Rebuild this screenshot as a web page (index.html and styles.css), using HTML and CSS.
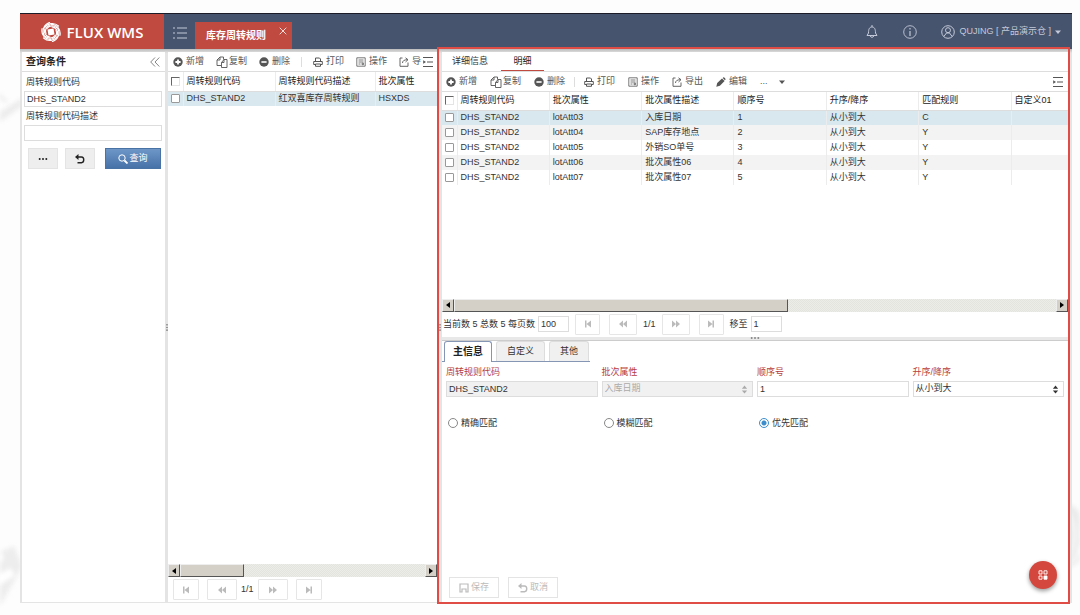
FILE: index.html
```html
<!DOCTYPE html>
<html lang="zh-CN">
<head>
<meta charset="utf-8">
<meta name="viewport" content="width=device-width, initial-scale=1">
<title>FLUX WMS</title>
<link rel="stylesheet" href="styles.css">
</head>
<body>
<svg class="sprite" aria-hidden="true">
  <symbol id="plus" viewBox="0 0 10 10"><circle cx="5" cy="5" r="4.700" fill="currentColor"/><path d="M5 2.400v5.200M2.400 5h5.200" stroke="#fff" stroke-width="1.800"/></symbol>
  <symbol id="minus" viewBox="0 0 10 10"><circle cx="5" cy="5" r="4.700" fill="currentColor"/><path d="M2.400 5h5.200" stroke="#fff" stroke-width="1.600"/></symbol>
  <symbol id="copy" viewBox="0 0 12 12" fill="none" stroke="currentColor" stroke-width=".9"><path d="M5 9.500H1V4l3-3h3.500v2.500M1 4h3V1M8 3.500h3v8H5.500V6.500l2.500-3v3H5.500"/></symbol>
  <symbol id="print" viewBox="0 0 10 10" fill="none" stroke="currentColor"><path d="M2.500 4.500V1h4l1 1v2.500M2 7.500H.7v-3h8.600v3H8M2.500 7h5v2.300h-5z"/></symbol>
  <symbol id="ops" viewBox="0 0 10 10" fill="none" stroke="currentColor" stroke-width=".8"><path d="M.8.800h8.400v8.400H.8zM2.500 3h5M2.500 5h5M2.500 7h2M6 6.200h1.500v1.500H6z"/></symbol>
  <symbol id="export" viewBox="0 0 10 10" fill="none" stroke="currentColor" stroke-width=".9"><path d="M3.500 1H1v8.300h8V5.500M3.500 6c0-2 1.500-3.300 5-3.300M6.500.8 9 2.700 6.500 5"/></symbol>
  <symbol id="edit" viewBox="0 0 10 10"><path d="M.3 9.700 1.200 6 6 1.400 8.600 4 3.900 8.700zM6.700.900 7.500.2c.5-.4 2.600 1.700 2 2.300l-.6.8z" fill="currentColor"/></symbol>
  <symbol id="indent" viewBox="0 0 12 12"><path d="M1 1.500h10M5 6h6M1 10.500h10" stroke="currentColor" stroke-width="1.100"/><path d="M1.200 4.300 4 6 1.200 7.700z" fill="currentColor"/></symbol>
  <symbol id="undo" viewBox="0 0 10 10"><path d="M2 3h4.500c3 0 3 5.700 0 5.700H2.500" fill="none" stroke="currentColor" stroke-width="1.400"/><path d="M0 3 3.500 0v6z" fill="currentColor"/></symbol>
  <symbol id="save" viewBox="0 0 10 10" fill="none" stroke="currentColor" stroke-width="1.200"><path d="M1 9V1h8v8H7V6H3v3zM3 6h4"/></symbol>
  <symbol id="first" viewBox="0 0 8 8"><path d="M1 .5h1.500v7H1zM7 .5v7L2.500 4z" fill="currentColor"/></symbol>
  <symbol id="prev" viewBox="0 0 8 8"><path d="M4 .5v7L0 4zM8 .5v7L4 4z" fill="currentColor"/></symbol>
  <symbol id="next" viewBox="0 0 8 8"><path d="M4 .5v7L8 4zM0 .5v7L4 4z" fill="currentColor"/></symbol>
  <symbol id="last" viewBox="0 0 8 8"><path d="M5.500.5H7v7H5.500zM1 .5v7L5.500 4z" fill="currentColor"/></symbol>
  <symbol id="updown" viewBox="0 0 8 10"><path d="M1 4 4 .5 7 4zM1 6l3 3.500L7 6z" fill="currentColor"/></symbol>
  <symbol id="tri" viewBox="0 0 4 6"><path d="M4 0v6L0 3z" fill="currentColor"/></symbol>
  <symbol id="down" viewBox="0 0 6 4"><path d="M0 .5h6L3 4z" fill="currentColor"/></symbol>
  <symbol id="dots" viewBox="0 0 12 4"><circle cx="2" cy="2" r="1.200" fill="currentColor"/><circle cx="6" cy="2" r="1.200" fill="currentColor"/><circle cx="10" cy="2" r="1.200" fill="currentColor"/></symbol>
</svg>
<svg class="mark mark-left-top" viewBox="0 0 30 60" aria-hidden="true"><path d="M0 42 22 28v8L0 52z" fill="#ececec"/><path d="M0 24q3 8 7 6" fill="none" stroke="#e6e6e6" stroke-width="2"/></svg>
<svg class="mark mark-left-bottom" viewBox="0 0 30 75" aria-hidden="true"><path d="M0 6 14 0l8 20-6 12L0 60z" fill="#ededed"/><path d="M0 6l4 5-4 6zM0 28l10-6 5 7L0 39z" fill="#fff"/></svg>
<svg class="mark mark-right" viewBox="0 0 12 70" aria-hidden="true"><path d="M0 2q8 2 12 10v46Q7 64 0 66z" fill="#ebebeb"/><path d="M0 10q13 22 0 46M12 44Q8 60 0 62" fill="none" stroke="#fff" stroke-width="2"/></svg>

<div class="app">
  <header class="topbar">
    <div class="brand">
      <svg viewBox="-10 -10 20 20" class="logo" aria-hidden="true"><g fill="none" stroke="#fff" stroke-width="1.200" stroke-linecap="round"><g id="arm"><path d="M-6.500-4C-3.500-9 3-10 7.500-6"/><path d="M-4-3.500C-2-6.500 2.500-7 5.500-4.500"/></g><use href="#arm" transform="rotate(60)"/><use href="#arm" transform="rotate(120)"/><use href="#arm" transform="rotate(180)"/><use href="#arm" transform="rotate(240)"/><use href="#arm" transform="rotate(300)"/></g><path d="M-3.500-2.500 2.500-3.500 3.500 2.500-2.500 3.500z" fill="#fff"/></svg>
      <span>FLUX WMS</span>
    </div>
    <button class="bare menu" aria-label="菜单"><svg viewBox="0 0 14 12"><path d="M4 1h10M4 6h10M4 11h10M0 1h2M0 6h2M0 11h2" stroke="#c3c9d8" stroke-width="1.200"/></svg></button>
    <div class="page-tab"><span>库存周转规则</span><button class="bare" aria-label="关闭"><svg viewBox="0 0 8 8"><path d="M.7.700l6.600 6.600M7.300.7.700 7.300" stroke="#fff" stroke-width=".8"/></svg></button></div>
    <div class="tools">
      <button class="bare" aria-label="通知"><svg class="i14" viewBox="0 0 14 14" fill="none" stroke="#c3c9d8"><path d="M7 0v2M2 10.500 3.500 8C3.500 4 4.500 2 7 2s3.500 2 3.500 6l1.500 2.500zM5 11q2 3 4 0"/></svg></button>
      <button class="bare" aria-label="信息"><svg class="i14" viewBox="0 0 14 14" fill="none" stroke="#c3c9d8"><circle cx="7" cy="7" r="6.300" stroke-width=".9"/><path d="M7 6v5M7 3v1.500" stroke-width="1.200"/></svg></button>
      <button class="bare user"><svg class="i14" viewBox="0 0 14 14" fill="none" stroke="#c3c9d8"><circle cx="7" cy="7" r="6.300"/><circle cx="7" cy="5.200" r="2.500"/><path d="M2.800 11.500 5.500 8h3l2.700 3.500"/></svg><span>QUJING [ 产品演示仓 ]</span><svg class="caret"><use href="#down"/></svg></button>
    </div>
  </header>

  <main class="main">
    <section class="pane">
      <div class="pane-title"><h2>查询条件</h2><button class="bare" aria-label="收起"><svg class="i10" viewBox="0 0 10 10"><path d="M5 .5.700 5 5 9.500M9.300.5 5 5l4.300 4.500" fill="none" stroke="#777" stroke-width=".9"/></svg></button></div>
      <form class="query">
        <label for="q1">周转规则代码</label>
        <input id="q1" value="DHS_STAND2">
        <label for="q2">周转规则代码描述</label>
        <input id="q2">
        <div class="query-actions">
          <button type="button" class="gray" aria-label="更多"><svg class="dots"><use href="#dots"/></svg></button>
          <button type="button" class="gray" aria-label="重置"><svg class="i10"><use href="#undo"/></svg></button>
          <button type="button" class="primary"><svg class="i10" viewBox="0 0 10 10"><circle cx="4" cy="4" r="3.200" fill="none" stroke="#fff"/><path d="M6.500 6.500 9.500 9.500" stroke="#fff" stroke-width="1.800"/></svg>查询</button>
        </div>
      </form>
    </section>
    <div class="gutter"><svg class="grip"><use href="#dots"/></svg></div>

    <section class="pane">
      <div class="toolbar">
        <button class="bare"><svg class="i10"><use href="#plus"/></svg>新增</button>
        <button class="bare"><svg class="i12"><use href="#copy"/></svg>复制</button>
        <button class="bare"><svg class="i10"><use href="#minus"/></svg>删除</button>
        <i class="sep"></i>
        <button class="bare"><svg class="i10"><use href="#print"/></svg>打印</button>
        <button class="bare"><svg class="i10"><use href="#ops"/></svg>操作</button>
        <button class="bare"><svg class="i10"><use href="#export"/></svg>导</button>
        <button class="bare columns" aria-label="列设置"><svg class="i12"><use href="#indent"/></svg></button>
      </div>
      <table class="grid tall-head">
        <colgroup><col class="c-check"><col class="c-code"><col class="c-desc"><col></colgroup>
        <thead><tr><th><input type="checkbox" class="old" aria-label="全选"></th><th>周转规则代码</th><th>周转规则代码描述</th><th>批次属性</th></tr></thead>
        <tbody><tr class="selected"><td><input type="checkbox" aria-label="选择"></td><td>DHS_STAND2</td><td>红双喜库存周转规则</td><td>HSXDS</td></tr></tbody>
      </table>
      <div class="fill"></div>
      <div class="scroll"><button aria-label="向左"><svg><use href="#tri"/></svg></button><div class="track"><div class="thumb" style="width:26%"></div></div><button class="flip" aria-label="向右"><svg><use href="#tri"/></svg></button></div>
      <div class="pager mid-pager">
        <button aria-label="首页"><svg><use href="#first"/></svg></button>
        <button aria-label="上一页"><svg><use href="#prev"/></svg></button>
        <span>1/1</span>
        <button aria-label="下一页"><svg><use href="#next"/></svg></button>
        <button aria-label="末页"><svg><use href="#last"/></svg></button>
      </div>
    </section>
    <div class="gutter"><svg class="grip"><use href="#dots"/></svg></div>

    <section class="pane detail">
      <div class="upper">
        <nav class="tabs"><button class="bare">详细信息</button><button class="bare active">明细</button></nav>
        <div class="toolbar">
          <button class="bare"><svg class="i10"><use href="#plus"/></svg>新增</button>
          <button class="bare"><svg class="i12"><use href="#copy"/></svg>复制</button>
          <button class="bare"><svg class="i10"><use href="#minus"/></svg>删除</button>
          <i class="sep"></i>
          <button class="bare"><svg class="i10"><use href="#print"/></svg>打印</button>
          <button class="bare"><svg class="i10"><use href="#ops"/></svg>操作</button>
          <button class="bare"><svg class="i10"><use href="#export"/></svg>导出</button>
          <button class="bare"><svg class="i10"><use href="#edit"/></svg>编辑</button>
          <button class="bare more">...<svg class="caret"><use href="#down"/></svg></button>
          <button class="bare columns" aria-label="列设置"><svg class="i12"><use href="#indent"/></svg></button>
        </div>
        <table class="grid">
          <colgroup><col class="c-check"><col><col><col><col><col><col><col class="c-last"></colgroup>
          <thead><tr><th><input type="checkbox" class="old" aria-label="全选"></th><th>周转规则代码</th><th>批次属性</th><th>批次属性描述</th><th>顺序号</th><th>升序/降序</th><th>匹配规则</th><th>自定义01</th></tr></thead>
          <tbody>
            <tr class="selected"><td><input type="checkbox" aria-label="选择 1"></td><td>DHS_STAND2</td><td>lotAtt03</td><td>入库日期</td><td>1</td><td>从小到大</td><td>C</td><td></td></tr>
            <tr><td><input type="checkbox" aria-label="选择 2"></td><td>DHS_STAND2</td><td>lotAtt04</td><td>SAP库存地点</td><td>2</td><td>从小到大</td><td>Y</td><td></td></tr>
            <tr><td><input type="checkbox" aria-label="选择 3"></td><td>DHS_STAND2</td><td>lotAtt05</td><td>外销SO单号</td><td>3</td><td>从小到大</td><td>Y</td><td></td></tr>
            <tr><td><input type="checkbox" aria-label="选择 4"></td><td>DHS_STAND2</td><td>lotAtt06</td><td>批次属性06</td><td>4</td><td>从小到大</td><td>Y</td><td></td></tr>
            <tr><td><input type="checkbox" aria-label="选择 5"></td><td>DHS_STAND2</td><td>lotAtt07</td><td>批次属性07</td><td>5</td><td>从小到大</td><td>Y</td><td></td></tr>
          </tbody>
        </table>
        <div class="fill"></div>
        <div class="scroll"><button aria-label="向左"><svg><use href="#tri"/></svg></button><div class="track"><div class="thumb" style="width:55.4%"></div></div><button class="flip" aria-label="向右"><svg><use href="#tri"/></svg></button></div>
        <div class="pager">
          <label for="size">当前数 5 总数 5 每页数</label><input id="size" value="100">
          <button aria-label="首页"><svg><use href="#first"/></svg></button>
          <button aria-label="上一页"><svg><use href="#prev"/></svg></button>
          <span>1/1</span>
          <button aria-label="下一页"><svg><use href="#next"/></svg></button>
          <button aria-label="末页"><svg><use href="#last"/></svg></button>
          <label for="goto">移至</label><input id="goto" value="1">
        </div>
      </div>
      <div class="splitter"><svg class="dots"><use href="#dots"/></svg></div>
      <form class="lower">
        <div class="subtabs"><button type="button" class="on">主信息</button><button type="button">自定义</button><button type="button">其他</button></div>
        <div class="fields">
          <div class="field"><label for="f1">周转规则代码</label><input id="f1" class="off" value="DHS_STAND2" readonly></div>
          <div class="field"><label for="f2">批次属性</label><div class="pick"><select id="f2" class="off" disabled><option>入库日期</option></select><svg><use href="#updown"/></svg></div></div>
          <div class="field"><label for="f3">顺序号</label><input id="f3" value="1"></div>
          <div class="field"><label for="f4">升序/降序</label><div class="pick"><select id="f4"><option>从小到大</option></select><svg><use href="#updown"/></svg></div></div>
          <label class="radio"><input type="radio" name="match">精确匹配</label>
          <label class="radio"><input type="radio" name="match">模糊匹配</label>
          <label class="radio"><input type="radio" name="match" checked>优先匹配</label>
        </div>
        <div class="fill"></div>
        <div class="form-actions">
          <button type="button" disabled><svg class="i10"><use href="#save"/></svg>保存</button>
          <button type="button" disabled><svg class="i10"><use href="#undo"/></svg>取消</button>
        </div>
      </form>
      <button class="fab" aria-label="应用"><svg class="i10" viewBox="0 0 10 10" fill="none" stroke="#fff" stroke-width=".9"><path d="M1 .8h3v3.200H1zM6 .8h3v3.200H6zM1 6h3v3.200H1z"/><path d="M6 6h3v3.200H6z" fill="#fff"/></svg></button>
    </section>
  </main>
</div>
</body>
</html>
```
FILE: styles.css
```css
* { box-sizing: border-box; }
body {
  margin: 0;
  min-height: 100vh;
  display: flex;
  padding: 13px 8px 12px 20px;
  background: #fdfdfd;
  color: #333;
  font: 9px/13px "Liberation Sans", "Noto Sans CJK SC", sans-serif;
  overflow: hidden;
}
button, input, select { font: inherit; color: inherit; margin: 0; padding: 0; border-radius: 0; }
button { display: inline-flex; align-items: center; justify-content: center; white-space: nowrap; }
.bare { border: 0; background: none; }
svg { flex: none; display: block; }
.sprite { position: absolute; width: 0; height: 0; }
.i10 { width: 10px; height: 10px; }
.i12 { width: 12px; height: 12px; }
.i14 { width: 14px; height: 14px; }
.caret { width: 6px; height: 4px; }
.dots { width: 10px; height: 4px; }
.fill { flex: 1; }

/* faint background artwork */
.mark { position: absolute; z-index: -1; filter: blur(2px); }
.mark-left-top { left: 0; top: 70px; width: 30px; }
.mark-left-bottom { left: 0; top: 546px; width: 30px; }
.mark-right { right: 0; top: 502px; width: 12px; }

.app { flex: 1; min-width: 0; display: flex; flex-direction: column; }

/* top bar */
.topbar { height: 36px; display: flex; align-items: stretch; background: #47546e; border-top: 1px solid #1c1c28; }
.brand { width: 144px; display: flex; align-items: center; justify-content: center; gap: 6px; background: #c04a40; color: #fff; font: 600 15px/20px "Open Sans", sans-serif; }
.logo { width: 20px; height: 20px; }
.menu { width: 31px; padding-top: 2px; }
.menu svg { width: 14px; height: 12px; }
.page-tab { display: flex; align-items: center; gap: 13px; margin-top: 8px; padding: 0 5px 0 11px; background: #c04a40; color: #fff; font-weight: bold; font-size: 10px; }
.page-tab button { align-self: flex-start; padding-top: 5px; }
.page-tab svg { width: 8px; height: 8px; }
.tools { margin-left: auto; padding-right: 11px; display: flex; align-items: center; gap: 24px; color: #c3c9d8; }
.user { gap: 4px; }

/* three panes */
.main { flex: 1; min-height: 0; padding: 3px 4px 1px 2px; display: grid; grid-template-columns: 143px 3px 269px 5px minmax(0, 1fr); background: linear-gradient(#bbb, #e4e4e4 4px); }
.pane { background: #fff; display: flex; flex-direction: column; min-width: 0; }
.gutter { display: flex; align-items: center; justify-content: center; color: #777; overflow: hidden; }
.grip { width: 8px; height: 3px; transform: rotate(90deg); }

.pane-title { height: 20px; display: flex; align-items: center; justify-content: space-between; padding: 0 5px 0 4px; border-bottom: 1px solid #ddd; }
.pane-title h2 { margin: 0; font-size: 10px; color: #222; }
.query { padding: 4px 3px 0 2px; display: flex; flex-direction: column; }
.query label { padding-left: 2px; margin-bottom: 2px; }
.query input { height: 16px; width: 100%; margin-bottom: 3px; }
input, select { border: 1px solid #ddd; background: #fff; padding: 0 2px; outline: 0; }
.query-actions { display: flex; gap: 7px; padding: 4px 1px 0 4px; }
.gray { width: 30px; height: 21px; border: 1px solid #e4e4e4; background: #eee; color: #222; }
.primary { flex: 1; margin-left: 3px; height: 21px; border: 1px solid #4973a5; background: linear-gradient(#6e97c8, #4772a8); color: #fff; gap: 1px; }

.toolbar { height: 20px; display: flex; align-items: center; gap: 13px; padding: 0 4px; border-bottom: 1px solid #ddd; color: #555; overflow: hidden; }
.toolbar .bare { gap: 3px; flex: none; }
.toolbar .bare:has(.i12) { gap: 1px; }
.toolbar .sep { flex: none; width: 1px; height: 10px; margin: 0 -4px; background: #ddd; }
.toolbar .columns { margin-left: auto; }
.toolbar .more { gap: 11px; }
.pane > .toolbar { padding: 0 4px 0 5px; gap: 12px; }
.pane > .toolbar .sep { margin: 0 -1px; }
.pane > .toolbar .columns { margin-left: -11px; }

.grid { width: 100%; table-layout: fixed; border-collapse: collapse; }
.grid th, .grid td { height: 15px; padding: 0 0 0 3px; text-align: left; font-weight: normal; white-space: nowrap; line-height: 13px; border-left: 1px solid #ececec; overflow: hidden; }
.grid th { height: 18px; border-bottom: 1px solid #ddd; color: #222; }
.grid td:first-child, .grid th:first-child { border-left: 0; }
.tall-head th { height: 19px; }
.grid tbody tr:nth-child(even) { background: #f3f3f3; }
.grid tbody .selected { background: #d9e8ef; }
.c-check { width: 15px; }
.c-code { width: 92px; }
.c-desc { width: 100px; }
.c-last { width: 57px; }
input[type="checkbox"] { appearance: none; display: block; width: 9px; height: 9px; border: 1px solid #999; border-radius: 1px; padding: 0; }
input.old { border-color: #666 #e4e4e4 #e4e4e4 #666; border-radius: 0; }

.scroll { height: 13px; display: flex; background: #e8e8e2; }
.scroll button { width: 12px; background: #d4d0c8; border: 1px solid; border-color: #eee #555 #555 #eee; color: #000; }
.scroll button svg { width: 4px; height: 6px; }
.scroll .flip svg { transform: scaleX(-1); }
.track { flex: 1; display: flex; background: repeating-conic-gradient(#e4e4de 0 25%, #ecece8 0 50%) 0 0 / 2px 2px; }
.thumb { background: #d4d0c8; border: 1px solid; border-color: #eee #555 #555 #eee; }

.pager { height: 25px; display: flex; align-items: center; padding-left: 1px; gap: 6px; }
.pager button { height: 21px; width: 28px; border: 1px solid #e6e6e6; border-radius: 1px; background: #fff; color: #bbb; }
.pager button:nth-of-type(1) { width: 25px; margin: 0 3px 0 0; }
.pager button:nth-of-type(4) { width: 25px; margin-left: 3px; }
.pager svg { width: 8px; height: 8px; }
.pager input { width: 31px; height: 16px; margin-left: -3px; }
.mid-pager { padding-left: 5px; gap: 4px; }
.mid-pager button, .mid-pager button:nth-of-type(1), .mid-pager button:nth-of-type(4) { width: 30px; margin: 0; }
.mid-pager button:nth-of-type(1) { width: 26px; margin-right: 4px; }
.mid-pager button:nth-of-type(4) { width: 26px; margin-left: 4px; }

/* highlighted detail pane */
.detail { position: relative; display: grid; grid-template-rows: minmax(0, 284fr) 4px minmax(0, 261fr); }
.detail::after { content: ""; position: absolute; inset: -5px -2px -2px -5px; border: 2px solid #df4c46; pointer-events: none; }
.upper, .lower { display: flex; flex-direction: column; min-height: 0; }
.tabs { height: 20px; display: flex; border-bottom: 1px solid #ddd; padding-left: 10px; gap: 13px; }
.tabs button { height: 19px; }
.tabs .active { width: 43px; border-bottom: 1px solid #c04a40; color: #222; }
.splitter { display: flex; justify-content: center; align-items: center; background: #e8e8e8; border-bottom: 1px solid #ccc; color: #888; }

.subtabs { display: flex; align-self: flex-start; gap: 4px; padding: 0 1px 0 2px; border-bottom: 1px solid #8596b5; }
.subtabs button { height: 20px; padding: 0 10px; background: #f0f0f0; border: 1px solid #ddd; border-bottom: 0; border-radius: 3px 3px 0 0; }
.subtabs .on { margin-bottom: -1px; background: #fff; border-color: #8596b5; font-size: 10px; font-weight: bold; color: #222; padding: 0 8px; height: 21px; }
.fields { display: grid; grid-template-columns: repeat(4, minmax(0, 1fr)); gap: 16px 4px; padding: 4px 4px 0; }
.field { display: flex; flex-direction: column; gap: 2px; }
.field label { color: #b83c3c; }
.field input, .field select { width: 100%; height: 16px; appearance: none; }
.field .off { background: #f1f1f1; }
.pick { position: relative; }
.pick svg { position: absolute; right: 5px; top: 4px; width: 7px; height: 9px; color: #333; pointer-events: none; }
.pick select { display: block; opacity: 1; }
.pick .off { color: #aaa; }
.pick .off + svg { color: #aaa; }
.radio { display: flex; align-items: center; gap: 3px; padding: 4px 2px; }
input[type="radio"] { appearance: none; width: 10px; height: 10px; padding: 0; border: 1px solid #888; border-radius: 50%; }
input[type="radio"]:checked { border-color: #3c8dcc; background: radial-gradient(#3c8dcc 0 2px, #fff 3px); }
.form-actions { display: flex; gap: 9px; padding: 0 7px 4px; }
.form-actions button { height: 21px; padding: 0 9px; gap: 2px; background: #fff; border: 1px solid #e4e4e4; color: #bbb; }
.fab { position: absolute; right: 11px; bottom: 13px; width: 28px; height: 28px; border: 0; border-radius: 50%; background: #d3473e; box-shadow: 0 2px 4px #0006; }
```
